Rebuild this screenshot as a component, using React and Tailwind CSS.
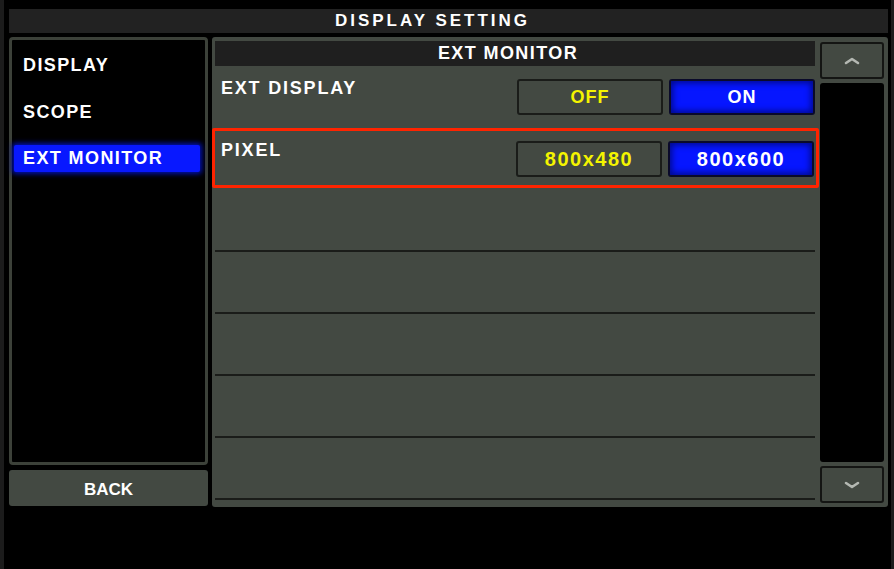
import React from "react";

// Display setting screen — EXT MONITOR page of a mixer-style touch panel
const FONT = { fontFamily: '"Liberation Sans", Arial, sans-serif' };

const menu = ["DISPLAY", "SCOPE", "EXT MONITOR"];

function Chevron({ down }) {
  return (
    <svg width="16" height="8" viewBox="0 0 16 8">
      <polyline
        points={down ? "2,2 8,6 14,2" : "2,6 8,2 14,6"}
        fill="none"
        stroke="#b4b8b2"
        strokeWidth="2.6"
        strokeLinecap="round"
        strokeLinejoin="round"
      />
    </svg>
  );
}

function OptionButton({ label, active, big }) {
  return (
    <div
      className={`w-[146px] h-full flex items-center justify-center rounded-[3px] border-2 font-bold ${
        active
          ? "bg-[#0616ff] border-[#0a0a2a] text-white shadow-[inset_0_0_6px_2px_#000a8a]"
          : "bg-[#434942] border-[#1a1c19] text-[#f4f400]"
      } ${big ? "text-[20px] tracking-[1.5px]" : "text-[18px] tracking-[1px]"}`}
    >
      {label}
    </div>
  );
}

function Row({ label, options, selected, big }) {
  return (
    <div className="flex justify-between">
      <div className="text-white font-bold text-[18px] leading-none tracking-[1.8px]">{label}</div>
      <div className="flex gap-[6px] h-[36px]">
        {options.map((o) => (
          <OptionButton key={o} label={o} active={o === selected} big={big} />
        ))}
      </div>
    </div>
  );
}

export default function App() {
  return (
    <div
      className="w-[894px] h-[569px] bg-black border-l-[4px] border-r-[3px] border-[#1c1c1c] pl-[5px] pr-[3px] pt-[9px] overflow-hidden"
      style={FONT}
    >
      {/* title */}
      <div className="h-[24px] bg-[#222222] flex items-center justify-center pr-[32px] text-white font-bold text-[17px] tracking-[3px]">
        DISPLAY SETTING
      </div>

      <div className="flex gap-[4px] mt-[4px] h-[470px]">
        {/* left menu */}
        <div className="w-[199px] flex flex-col gap-[5px]">
          <div className="h-[428px] bg-black border-[3px] border-[#3c4139] rounded-[4px] pt-[12px] pl-[2px] pr-[5px] flex flex-col gap-[19.5px]">
            {menu.map((m) => {
              const active = m === "EXT MONITOR";
              return (
                <div
                  key={m}
                  className={`h-[27px] flex items-center pl-[9px] text-white font-bold text-[18px] tracking-[1.4px] rounded-[2px] ${
                    active ? "bg-[#0818ff] shadow-[0_0_5px_2px_#0010b0]" : ""
                  }`}
                >
                  {m}
                </div>
              );
            })}
          </div>
          <div className="h-[36px] bg-[#434942] rounded-[3px] flex items-center justify-center pt-[3px] text-white font-bold text-[17px]">
            BACK
          </div>
        </div>

        {/* right panel */}
        <div className="flex-1 bg-[#434942] rounded-[3px] pt-[4px] pb-[4px] pl-[3px] pr-[4px] flex gap-[5px]">
          <div className="w-[600px] flex flex-col">
            <div className="h-[25px] bg-[#1f1f1f] flex items-center justify-center pr-[14px] text-white font-bold text-[18px] tracking-[1.4px]">
              EXT MONITOR
            </div>

            {/* EXT DISPLAY */}
            <div className="h-[62px] pl-[6px] pt-[13px]">
              <Row label="EXT DISPLAY" options={["OFF", "ON"]} selected="ON" />
            </div>

            {/* PIXEL — focused row */}
            <div className="h-[62px]">
              <div className="-ml-[3px] -mr-[4px] h-[60px] border-[3px] border-[#ff2400] rounded-[2px] pl-[6px] pr-[2px] pt-[10px]">
                <Row label="PIXEL" options={["800x480", "800x600"]} selected="800x600" big />
              </div>
            </div>

            {[0, 1, 2, 3, 4].map((i) => (
              <div key={i} className="h-[62px] shrink-0 border-b-2 border-[#1a1c19]" />
            ))}
          </div>

          {/* scroll column */}
          <div className="flex-1 flex flex-col gap-[4px] pt-[1px]">
            <div className="h-[37px] bg-[#434942] border-2 border-[#141513] rounded-[3px] flex items-center justify-center">
              <Chevron />
            </div>
            <div className="flex-1 bg-black rounded-[3px]" />
            <div className="h-[37px] bg-[#434942] border-2 border-[#141513] rounded-[3px] flex items-center justify-center">
              <Chevron down />
            </div>
          </div>
        </div>
      </div>
    </div>
  );
}
